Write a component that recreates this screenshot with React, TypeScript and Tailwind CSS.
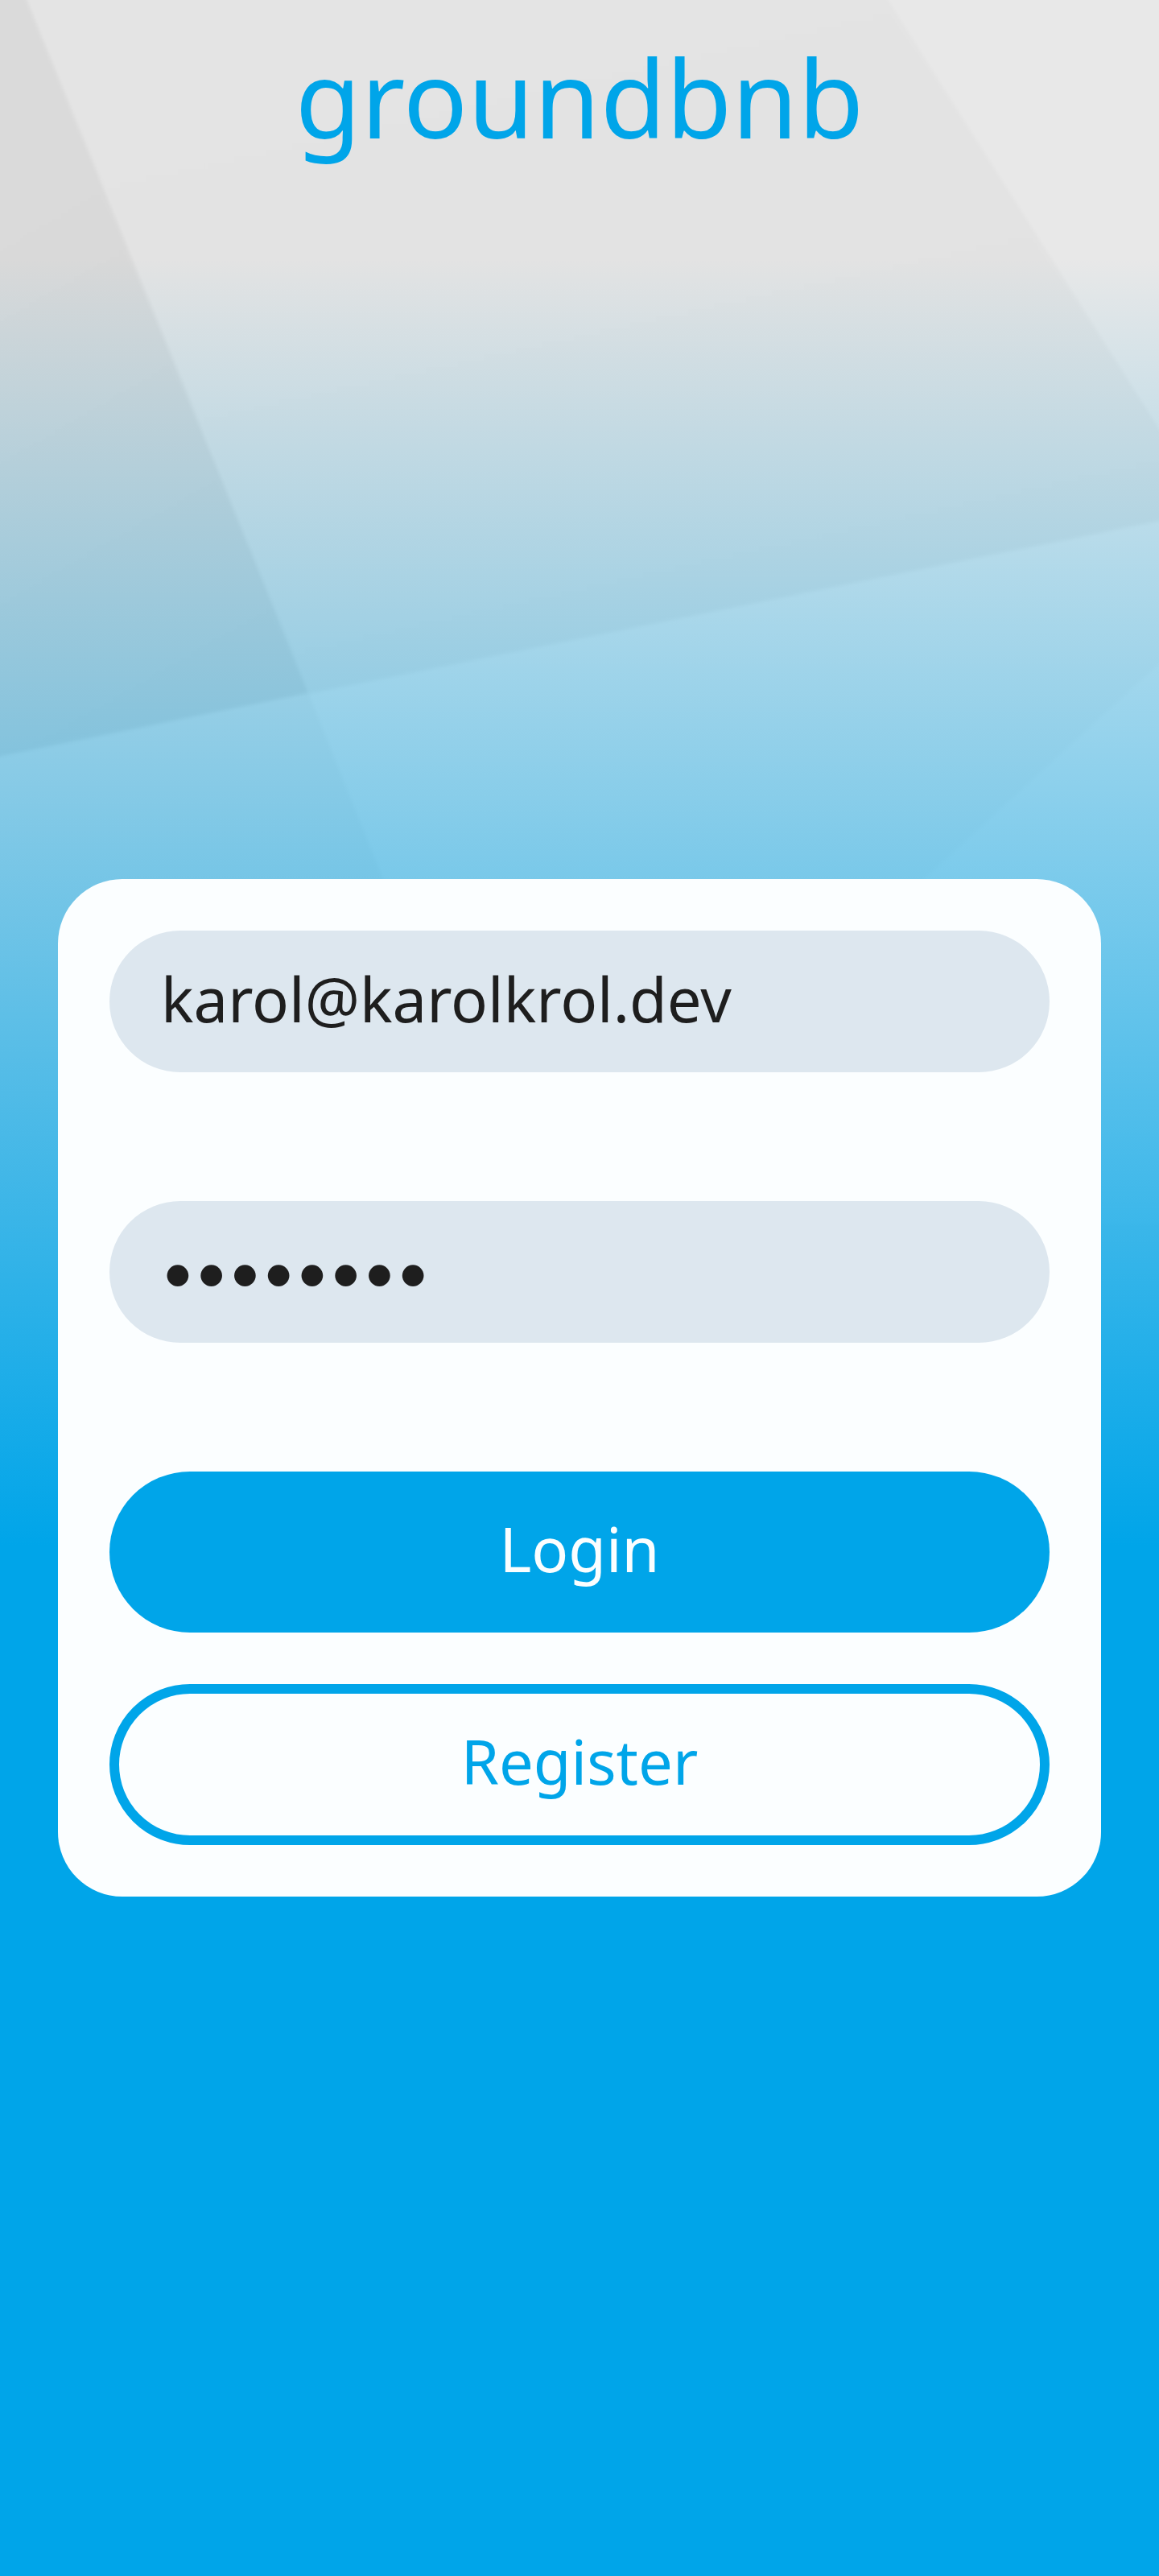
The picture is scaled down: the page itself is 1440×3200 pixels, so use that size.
import { useState } from "react";

function Backdrop() {
  return (
    <div className="absolute inset-0 overflow-hidden" aria-hidden="true">
      <svg className="h-full w-full" viewBox="0 0 1440 3200" preserveAspectRatio="none">
        <defs>
          <linearGradient id="shade" gradientUnits="userSpaceOnUse" x1="0" y1="200" x2="380" y2="860">
            <stop offset="0" stopColor="#dadada" />
            <stop offset="1" stopColor="#d5d5d5" />
          </linearGradient>
          <linearGradient id="pane" gradientUnits="userSpaceOnUse" x1="300" y1="0" x2="500" y2="900">
            <stop offset="0" stopColor="#e4e4e4" />
            <stop offset="1" stopColor="#e1e1e1" />
          </linearGradient>
          <linearGradient id="fade" x1="0" y1="0" x2="0" y2="1">
            <stop offset="0.1" stopColor="#00a5e9" stopOpacity="0" />
            <stop offset="0.6" stopColor="#00a5e9" />
          </linearGradient>
          <filter id="soften" filterUnits="userSpaceOnUse" x="-60" y="-60" width="1560" height="3320">
            <feGaussianBlur stdDeviation="2" />
          </filter>
        </defs>
        <rect width="1440" height="3200" fill="#eaeaea" />
        <g filter="url(#soften)">
          <path d="M-40 -40H1480V639L-40 948Z" fill="url(#pane)" />
          <path d="M-40 -40H17L383 861L-40 948Z" fill="url(#shade)" />
          <path d="M1078 -40H1480V596Z" fill="#e8e8e8" />
          <path d="M-40 948L383 861L900 2144H-40Z" fill="#e4e4e4" />
          <path d="M1480 788L1148 1092L700 1520H1480Z" fill="#eeeeee" />
        </g>
        <rect width="1440" height="3200" fill="url(#fade)" />
      </svg>
    </div>
  );
}

const field = "mb-40 h-44 w-full rounded-full bg-[#dde7ef] px-16 text-[#1e1e1e] outline-none";
const button = "h-50 w-full rounded-full pb-2 text-[76px]";

export default function App() {
  const [email, setEmail] = useState("karol@karolkrol.dev");
  const [password, setPassword] = useState("password");

  return (
    <div className="relative flex min-h-screen flex-col font-['Noto_Sans',sans-serif]">
      <Backdrop />
      <header className="relative flex h-62 items-center justify-center pb-2">
        <h1 className="text-[133px] leading-none text-[#00a5e9]">groundbnb</h1>
      </header>
      <main className="relative flex grow items-center justify-center">
        <form
          className="flex w-9/10 flex-col rounded-[80px] bg-[#fbfeff] p-16"
          onSubmit={(event) => event.preventDefault()}
        >
          <input
            className={`${field} pb-2 text-[76px]`}
            type="email"
            aria-label="Email"
            value={email}
            onChange={(event) => setEmail(event.target.value)}
          />
          <input
            className={`${field} pb-1 font-['Lato',sans-serif] text-[72px]`}
            type="password"
            aria-label="Password"
            value={password}
            onChange={(event) => setPassword(event.target.value)}
          />
          <button className={`${button} mb-16 bg-[#00a5e9] text-[#fbfeff]`} type="submit">
            Login
          </button>
          <button className={`${button} border-12 border-[#00a5e9] text-[#00a5e9]`} type="button">
            Register
          </button>
        </form>
      </main>
    </div>
  );
}
